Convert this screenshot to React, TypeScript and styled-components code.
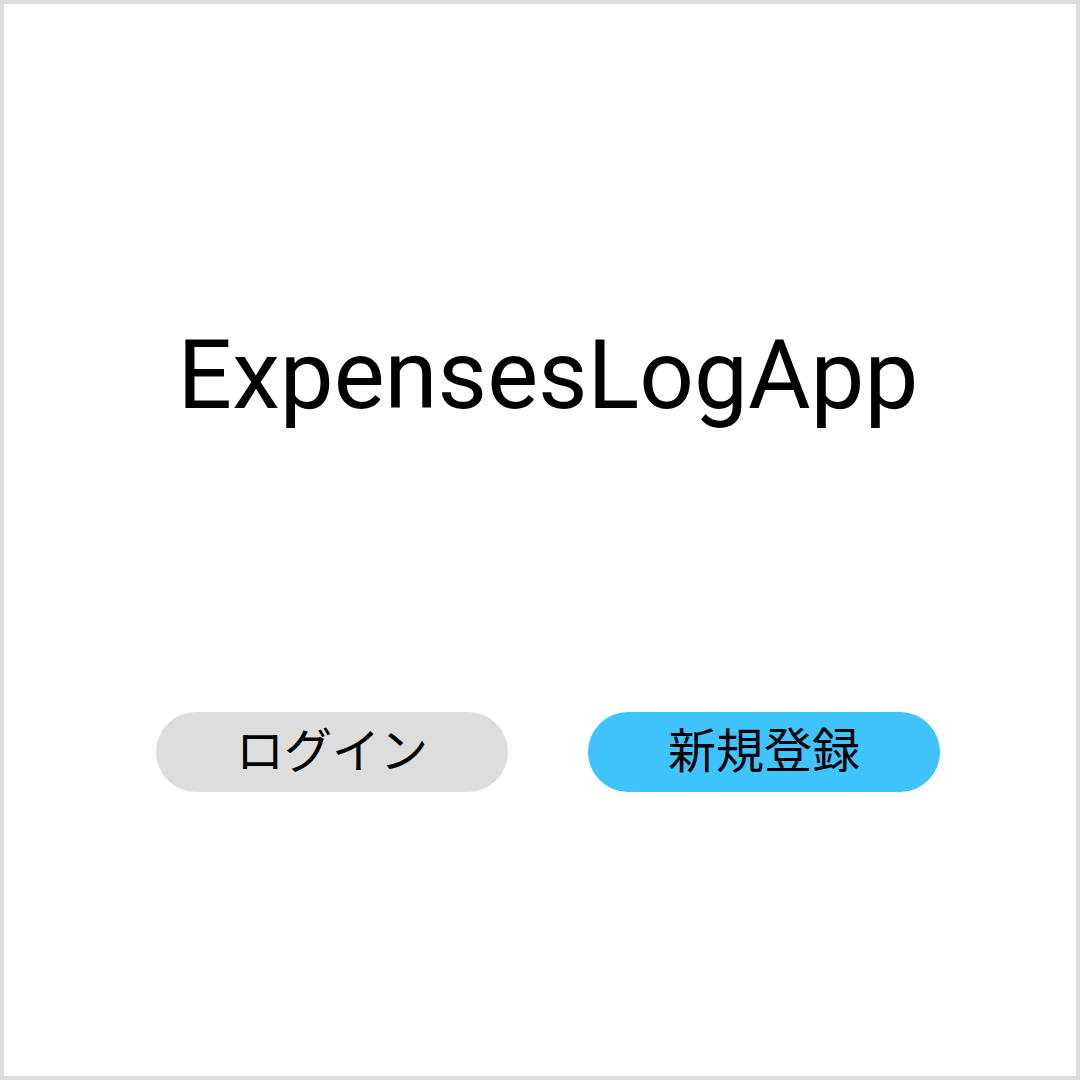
import React from "react";
import styled, { createGlobalStyle } from "styled-components";

const Global = createGlobalStyle`
  html, body { margin: 0; padding: 0; background: #ffffff; }
  body { font-family: Roboto, "Noto Sans CJK JP", sans-serif; }
`;

const Frame = styled.div`
  box-sizing: border-box;
  width: 1080px;
  height: 1080px;
  border: 4px solid #dddddd;
  background: #ffffff;
  display: flex;
  flex-direction: column;
  align-items: center;
  padding-left: 16px;
  padding-top: 323px;
`;

const Title = styled.h1`
  margin: 0;
  font-family: Roboto, sans-serif;
  font-weight: 400;
  font-size: 96px;
  line-height: 96px;
  color: #000000;
  letter-spacing: 0;
`;

const Actions = styled.div`
  display: flex;
  gap: 80px;
  margin-top: 289px;
`;

const PillButton = styled.button<{ $primary?: boolean }>`
  width: 352px;
  height: 80px;
  border: none;
  border-radius: 40px;
  background: ${(p) => (p.$primary ? "#40c4ff" : "#dddddd")};
  color: #000000;
  font-family: "Noto Sans CJK JP", sans-serif;
  font-size: 48px;
  line-height: 1;
  display: flex;
  align-items: center;
  justify-content: center;
  padding: 0 0 10px 0;
  cursor: pointer;
`;

export default function App() {
  return (
    <>
      <Global />
      <Frame>
        <Title>ExpensesLogApp</Title>
        <Actions>
          <PillButton>ログイン</PillButton>
          <PillButton $primary>新規登録</PillButton>
        </Actions>
      </Frame>
    </>
  );
}
